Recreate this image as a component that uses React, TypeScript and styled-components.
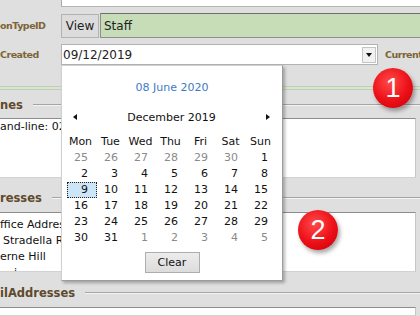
import React from "react";
import styled, { createGlobalStyle } from "styled-components";

const GlobalStyle = createGlobalStyle`
  html, body {
    margin: 0;
    padding: 0;
    background: #dfdfdf;
    overflow: hidden;
  }
  body {
    font-family: "DejaVu Sans", Verdana, sans-serif;
  }
`;

const Page = styled.div`
  position: relative;
  width: 420px;
  height: 316px;
  overflow: hidden;
  background: #dfdfdf;
  display: flex;
  flex-direction: column;
`;

const TopStrip = styled.div`
  display: flex;
  height: 7px;
  padding-left: 61px;
  flex: none;
`;

const TopField = styled.div`
  flex: 1;
  background: #ffffff;
  border-left: 1px solid #a9a9a9;
  border-bottom: 1px solid #b4b4b4;
`;

const FormRow = styled.div<{ $h: number; $mt: number }>`
  display: flex;
  align-items: center;
  flex: none;
  height: ${(p) => p.$h}px;
  margin-top: ${(p) => p.$mt}px;
`;

const FieldLabel = styled.div`
  width: 61px;
  flex: none;
  overflow: hidden;
  white-space: nowrap;
  font: bold 9.5px "DejaVu Sans", Verdana, sans-serif;
  letter-spacing: -0.5px;
  color: #7d6437;
`;

const ViewButton = styled.div`
  width: 38px;
  height: 24px;
  margin-top: 1px;
  box-sizing: border-box;
  flex: none;
  display: flex;
  align-items: center;
  justify-content: center;
  background: #dcdcdc;
  border: 1px solid #b2b2b2;
  font-size: 12px;
  color: #222;
`;

const GreenField = styled.div`
  flex: 1;
  height: 25px;
  margin-left: 1px;
  box-sizing: border-box;
  display: flex;
  align-items: center;
  padding-left: 3px;
  background: #c6ddb8;
  border: 1px solid #8e8e8e;
  border-top-color: #6f6f6f;
  border-right: none;
  font-size: 12px;
  color: #222;
`;

const DateBox = styled.div`
  position: relative;
  width: 317px;
  height: 21px;
  box-sizing: border-box;
  flex: none;
  display: flex;
  align-items: center;
  padding-left: 1px;
  background: #ffffff;
  border: 1px solid #b3b3b3;
  font-size: 12px;
  color: #222;
`;

const DateValue = styled.span`
  flex: 1;
`;

const DropButton = styled.div`
  width: 14px;
  height: 16px;
  margin-right: 1px;
  box-sizing: border-box;
  display: flex;
  align-items: center;
  justify-content: center;
  background: #f1f1f1;
  border: 1px solid #c4c4c4;

  &::after {
    content: "";
    border-left: 3.5px solid transparent;
    border-right: 3.5px solid transparent;
    border-top: 4px solid #111;
  }
`;

const SideLabel = styled.div`
  margin-left: 7px;
  white-space: nowrap;
  font: bold 9.5px "DejaVu Sans", Verdana, sans-serif;
  letter-spacing: -0.5px;
  color: #7d6437;
`;

const Separator = styled.div`
  flex: none;
  height: 2px;
  margin-top: 21px;
  border-top: 1px solid #b9d4a6;
  border-bottom: 1px solid #b9d4a6;
`;

const Legend = styled.div<{ $h: number; $pt: number }>`
  flex: none;
  height: ${(p) => p.$h}px;
  padding-top: ${(p) => p.$pt}px;
  box-sizing: border-box;
  display: flex;
  align-items: center;
  gap: 10px;
`;

const LegendText = styled.span`
  white-space: nowrap;
  font: bold 11.5px "DejaVu Sans", Verdana, sans-serif;
  color: #5e4a2c;
`;

const LegendRule = styled.div`
  flex: 1;
  height: 0;
  border-top: 1px solid #a4a4a4;
  border-bottom: 1px solid #f4f4f4;
`;

const Panel = styled.div<{ $h?: number; $pt: number }>`
  flex: ${(p) => (p.$h ? "none" : "1")};
  height: ${(p) => (p.$h ? `${p.$h}px` : "auto")};
  box-sizing: border-box;
  margin-right: 4px;
  padding-top: ${(p) => p.$pt}px;
  overflow: hidden;
  background: #ffffff;
  border-top: 1px solid #8d8d8d;
  border-right: 1px solid #c6c6c6;
  border-bottom: 1px solid #d2d2d2;
  font-size: 11px;
  line-height: 16px;
  color: #111;
`;

const PanelLine = styled.div<{ $indent?: number }>`
  white-space: nowrap;
  padding-left: ${(p) => p.$indent ?? 0}px;
`;

const Popup = styled.div`
  position: absolute;
  left: -1px;
  top: calc(100% + 1px);
  z-index: 10;
  width: 210px;
  padding: 14px 5px 7px;
  background: #ffffff;
  border: 1px solid #d0d0d0;
  border-right-color: #9c9c9c;
  border-bottom-color: #9c9c9c;
  box-shadow: 2px 2px 3px rgba(0, 0, 0, 0.28);
  font-size: 11px;
  color: #111;
`;

const TodayLink = styled.div`
  text-align: center;
  line-height: 16px;
  color: #3b7bc6;
`;

const NavRow = styled.div`
  display: flex;
  align-items: center;
  height: 16px;
  margin-top: 13px;
  padding: 0 7px 0 6px;
`;

const NavArrow = styled.span<{ $dir: "left" | "right" }>`
  width: 0;
  height: 0;
  border-top: 3.5px solid transparent;
  border-bottom: 3.5px solid transparent;
  ${(p) =>
    p.$dir === "left"
      ? "border-right: 4px solid #111;"
      : "border-left: 4px solid #111;"}
`;

const MonthTitle = styled.span`
  flex: 1;
  text-align: center;
`;

const DayGrid = styled.div`
  display: grid;
  grid-template-columns: repeat(7, 30px);
  grid-auto-rows: 16px;
  margin-top: 9px;
`;

const DayHead = styled.div`
  text-align: center;
  padding-right: 3px;
  line-height: 16px;
`;

const DayCell = styled.div<{ $muted?: boolean; $selected?: boolean }>`
  box-sizing: border-box;
  text-align: right;
  padding-right: 8px;
  line-height: 14px;
  border: 1px dotted ${(p) => (p.$selected ? "#222" : "transparent")};
  background: ${(p) => (p.$selected ? "#cce6f8" : "transparent")};
  color: ${(p) => (p.$muted ? "#8a8a8a" : "#111")};
`;

const ClearButton = styled.div`
  width: 55px;
  height: 21px;
  margin: 6px auto 0;
  box-sizing: border-box;
  display: flex;
  align-items: center;
  justify-content: center;
  background: linear-gradient(#ececec, #dcdcdc);
  border: 1px solid #adadad;
  font-size: 11px;
  color: #111;
`;

const Badge = styled.div<{ $x: number; $y: number }>`
  position: absolute;
  left: ${(p) => p.$x}px;
  top: ${(p) => p.$y}px;
  z-index: 20;
  width: 40px;
  height: 40px;
  border-radius: 50%;
  display: flex;
  align-items: center;
  justify-content: center;
  background: radial-gradient(circle at 42% 35%, #ff4a4a 0%, #ec0f17 55%, #c3000a 100%);
  box-shadow: 2px 3px 4px rgba(0, 0, 0, 0.35);
  font: 27px "Liberation Sans", Arial, sans-serif;
  color: #ffffff;
`;

const weekDays = ["Mon", "Tue", "Wed", "Thu", "Fri", "Sat", "Sun"];

// Nov 25 2019 .. Jan 5 2020
const days: { n: number; muted: boolean }[] = [];
for (let n = 25; n <= 30; n++) days.push({ n, muted: true });
for (let n = 1; n <= 31; n++) days.push({ n, muted: false });
for (let n = 1; n <= 5; n++) days.push({ n, muted: true });

const App: React.FC = () => {
  return (
    <>
      <GlobalStyle />
      <Page>
        <TopStrip>
          <TopField />
        </TopStrip>

        <FormRow $h={25} $mt={6}>
          <FieldLabel>onTypeID</FieldLabel>
          <ViewButton>View</ViewButton>
          <GreenField>Staff</GreenField>
        </FormRow>

        <FormRow $h={21} $mt={6}>
          <FieldLabel>Created</FieldLabel>
          <DateBox>
            <DateValue>09/12/2019</DateValue>
            <DropButton />
            <Popup>
              <TodayLink>08 June 2020</TodayLink>
              <NavRow>
                <NavArrow $dir="left" />
                <MonthTitle>December 2019</MonthTitle>
                <NavArrow $dir="right" />
              </NavRow>
              <DayGrid>
                {weekDays.map((d) => (
                  <DayHead key={d}>{d}</DayHead>
                ))}
                {days.map((d, i) => (
                  <DayCell
                    key={i}
                    $muted={d.muted}
                    $selected={!d.muted && d.n === 9}
                  >
                    {d.n}
                  </DayCell>
                ))}
              </DayGrid>
              <ClearButton>Clear</ClearButton>
            </Popup>
          </DateBox>
          <SideLabel>Current</SideLabel>
        </FormRow>

        <Separator />

        <Legend $h={28} $pt={2}>
          <LegendText>nes</LegendText>
          <LegendRule />
        </Legend>
        <Panel $h={60} $pt={0}>
          <PanelLine>and-line: 020 7274 1100</PanelLine>
        </Panel>

        <Legend $h={34} $pt={6}>
          <LegendText>resses</LegendText>
          <LegendRule />
        </Legend>
        <Panel $h={60} $pt={4}>
          <PanelLine>ffice Address</PanelLine>
          <PanelLine $indent={3}>Stradella Road</PanelLine>
          <PanelLine>erne Hill</PanelLine>
          <PanelLine $indent={14}>i</PanelLine>
        </Panel>

        <Legend $h={35} $pt={6}>
          <LegendText>ilAddresses</LegendText>
          <LegendRule />
        </Legend>
        <Panel $pt={5}>
          <PanelLine $indent={8}>info@Oldhallhillside.co.uk</PanelLine>
        </Panel>

        <Badge $x={373} $y={68}>1</Badge>
        <Badge $x={298} $y={210}>2</Badge>
      </Page>
    </>
  );
};

export default App;
